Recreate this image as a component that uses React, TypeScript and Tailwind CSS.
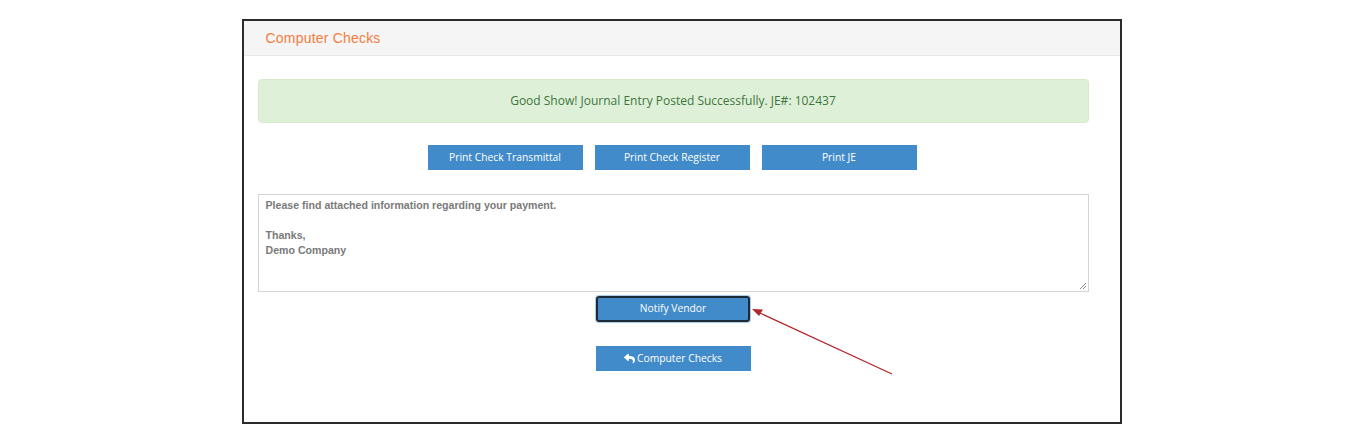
import React from 'react';
import { FaReply } from 'react-icons/fa';

const btn =
    'h-[25px] bg-[#428bca] text-white text-[10.3px] font-["Open_Sans",sans-serif] flex items-center justify-center';

export default function App() {
    return (
        <div className="relative w-full h-[428px] bg-white pt-[19px]">
            <div className="mx-auto w-[880px] h-[405px] border-2 border-[#2b2b2b] flex flex-col">
                {/* panel header */}
                <div className="h-[35px] bg-[#f5f5f5] border-b border-[#e7e7e7] flex items-center pl-[22px]">
                    <span className="text-[14px] tracking-[0.2px] text-[#f47c3c] font-['Liberation_Sans',Arial,sans-serif]">
                        Computer Checks
                    </span>
                </div>

                <div className="pl-[14px] pr-[31px] pt-[23px] flex flex-col">
                    <div className="h-[44px] rounded-[4px] bg-[#dff0d8] border border-[#d6ebcc] flex items-center justify-center text-[12px] text-[#3c763d] font-['Open_Sans',sans-serif]">
                        Good Show! Journal Entry Posted Successfully. JE#: 102437
                    </div>

                    <div className="mt-[22px] flex justify-center gap-[12px] pr-[2px]">
                        <button className={`${btn} w-[155px]`}>Print Check Transmittal</button>
                        <button className={`${btn} w-[155px]`}>Print Check Register</button>
                        <button className={`${btn} w-[155px]`}>Print JE</button>
                    </div>

                    <div className="mt-[24px] h-[98px] border border-[#d4d4d4] relative px-[7px] pt-[3px] text-[10.6px] leading-[15px] font-bold text-[#7a7a7a] font-['Liberation_Sans',Arial,sans-serif]">
                        <div>Please find attached information regarding your payment.</div>
                        <div>&nbsp;</div>
                        <div>Thanks,</div>
                        <div>Demo Company</div>
                        <svg className="absolute right-[1px] bottom-[1px]" width="8" height="8" viewBox="0 0 8 8">
                            <path d="M7 1 L1 7 M7 4 L4 7" stroke="#888" strokeWidth="1" />
                        </svg>
                    </div>

                    <div className="mt-[4px] flex justify-center">
                        <div className="ring-1 ring-[#a9cdee] rounded-[3px]">
                            <button className={`${btn} w-[154px] h-[26px] border-2 border-[#1e2a36] rounded-[3px]`}>
                                Notify Vendor
                            </button>
                        </div>
                    </div>

                    <div className="mt-[24px] flex justify-center">
                        <button className={`${btn} w-[155px] gap-[2px]`}>
                            <FaReply className="w-[11px] h-[11px]" />
                            Computer Checks
                        </button>
                    </div>
                </div>
            </div>

            {/* annotation arrow */}
            <svg className="absolute left-0 top-0 pointer-events-none" width="1363" height="428">
                <line x1="892" y1="374" x2="760" y2="313" stroke="#b3262b" strokeWidth="1.3" />
                <polygon points="752,309 763,309.5 759,316" fill="#b3262b" />
            </svg>
        </div>
    );
}
